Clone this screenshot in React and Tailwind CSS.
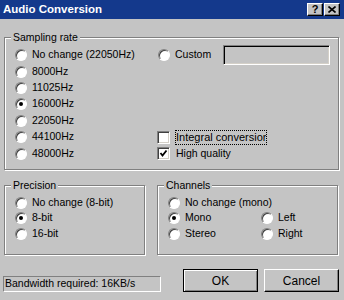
import React from 'react';

const Radio = ({ checked }) => (
  <span className="w-[12px] h-[12px] shrink-0 rounded-full bg-white border border-t-[#808080] border-l-[#808080] border-b-white border-r-white shadow-[inset_1px_1px_0_#404040] flex items-center justify-center">
    {checked && <span className="w-[4px] h-[4px] rounded-full bg-black" />}
  </span>
);

const Check = ({ checked }) => (
  <span className="w-[13px] h-[13px] shrink-0 bg-white border border-t-[#808080] border-l-[#808080] border-b-white border-r-white shadow-[inset_1px_1px_0_#404040,inset_-1px_-1px_0_#d4d0c8] flex items-center justify-center">
    {checked && (
      <svg width="9" height="9" viewBox="0 0 9 9">
        <polyline points="1.5,4 3.5,6.5 7.5,1.5" fill="none" stroke="#000" strokeWidth="1.8" />
      </svg>
    )}
  </span>
);

const Option = ({ checked, children }) => (
  <div className="flex items-center gap-[5px] whitespace-nowrap">
    <Radio checked={checked} />
    <span>{children}</span>
  </div>
);

const Group = ({ label, className, children }) => (
  <div className={`relative border border-[#808080] shadow-[inset_1px_1px_0_#fff,1px_1px_0_#fff] ${className}`}>
    <span className="absolute -top-[7px] left-[6px] bg-[#c4c4c4] px-[2px] leading-[13px]">{label}</span>
    {children}
  </div>
);

const App = () => {
  return (
    <div className="w-[344px] h-[300px] bg-[#c4c4c4] text-black font-['Liberation_Sans',Arial,sans-serif] text-[10.5px] overflow-hidden">
      <div className="h-[19px] bg-[#14398c] flex items-center justify-between pl-[3px] pr-[4px]">
        <span className="text-white font-bold text-[11.5px]">Audio Conversion</span>
        <div className="flex gap-[1px]">
          <span className="w-[16px] h-[13px] bg-[#c4c4c4] border border-t-white border-l-white border-r-black border-b-black shadow-[inset_-1px_-1px_0_#808080] flex items-center justify-center font-bold text-[11px] leading-none">?</span>
          <span className="w-[16px] h-[13px] bg-[#c4c4c4] border border-t-white border-l-white border-r-black border-b-black shadow-[inset_-1px_-1px_0_#808080] flex items-center justify-center">
            <svg width="8" height="7" viewBox="0 0 8 7">
              <path d="M0.5 0.5 L7.5 6.5 M7.5 0.5 L0.5 6.5" stroke="#000" strokeWidth="1.6" />
            </svg>
          </span>
        </div>
      </div>

      <Group label="Sampling rate" className="mt-[18px] ml-[4px] w-[335px] h-[133px]">
        <div className="grid grid-cols-[142px_1fr] auto-rows-[16.4px] items-center pt-[9px] pl-[10px]">
          <Option>No change (22050Hz)</Option>
          <div className="flex items-center">
            <div className="ml-[1px] w-[65px]">
              <Option>Custom</Option>
            </div>
            <div className="w-[107px] h-[20px] bg-[#c4c4c4] border border-t-[#808080] border-l-[#808080] border-b-white border-r-white shadow-[inset_1px_1px_0_#000,inset_-1px_-1px_0_#d4d0c8]" />
          </div>
          <Option>8000Hz</Option>
          <div />
          <Option>11025Hz</Option>
          <div />
          <Option checked>16000Hz</Option>
          <div />
          <Option>22050Hz</Option>
          <div />
          <Option>44100Hz</Option>
          <div className="flex items-center gap-[5px]">
            <Check />
            <span className="w-[92px] h-[15px] border border-dotted border-black overflow-hidden whitespace-nowrap leading-[13px] text-[11px]">Integral conversion</span>
          </div>
          <Option>48000Hz</Option>
          <div className="flex items-center gap-[6px]">
            <Check checked />
            <span>High quality</span>
          </div>
        </div>
      </Group>

      <div className="flex mt-[15px] ml-[4px] gap-[12px]">
        <Group label="Precision" className="w-[141px] h-[70px]">
          <div className="grid auto-rows-[15.5px] items-center pt-[9px] pl-[10px]">
            <Option>No change (8-bit)</Option>
            <Option checked>8-bit</Option>
            <Option>16-bit</Option>
          </div>
        </Group>
        <Group label="Channels" className="w-[181px] h-[70px]">
          <div className="grid grid-cols-[93px_1fr] auto-rows-[15.5px] items-center pt-[9px] pl-[10px]">
            <div className="col-span-2">
              <Option>No change (mono)</Option>
            </div>
            <Option checked>Mono</Option>
            <Option>Left</Option>
            <Option>Stereo</Option>
            <Option>Right</Option>
          </div>
        </Group>
      </div>

      <div className="flex items-end mt-[14px] h-[23px]">
        <div className="ml-[3px] w-[158px] h-[16px] border border-t-[#808080] border-l-[#808080] border-b-white border-r-white flex items-center pl-[1px] whitespace-nowrap">
          Bandwidth required: 16KB/s
        </div>
        <button className="ml-[22px] w-[75px] h-[23px] bg-[#c4c4c4] border border-black shadow-[inset_1px_1px_0_#fff,inset_-1px_-1px_0_#808080] text-[12px]">
          OK
        </button>
        <button className="ml-[6px] w-[75px] h-[23px] bg-[#c4c4c4] border border-t-white border-l-white border-r-black border-b-black shadow-[inset_-1px_-1px_0_#808080] text-[12px]">
          Cancel
        </button>
      </div>
    </div>
  );
};

export default App;
